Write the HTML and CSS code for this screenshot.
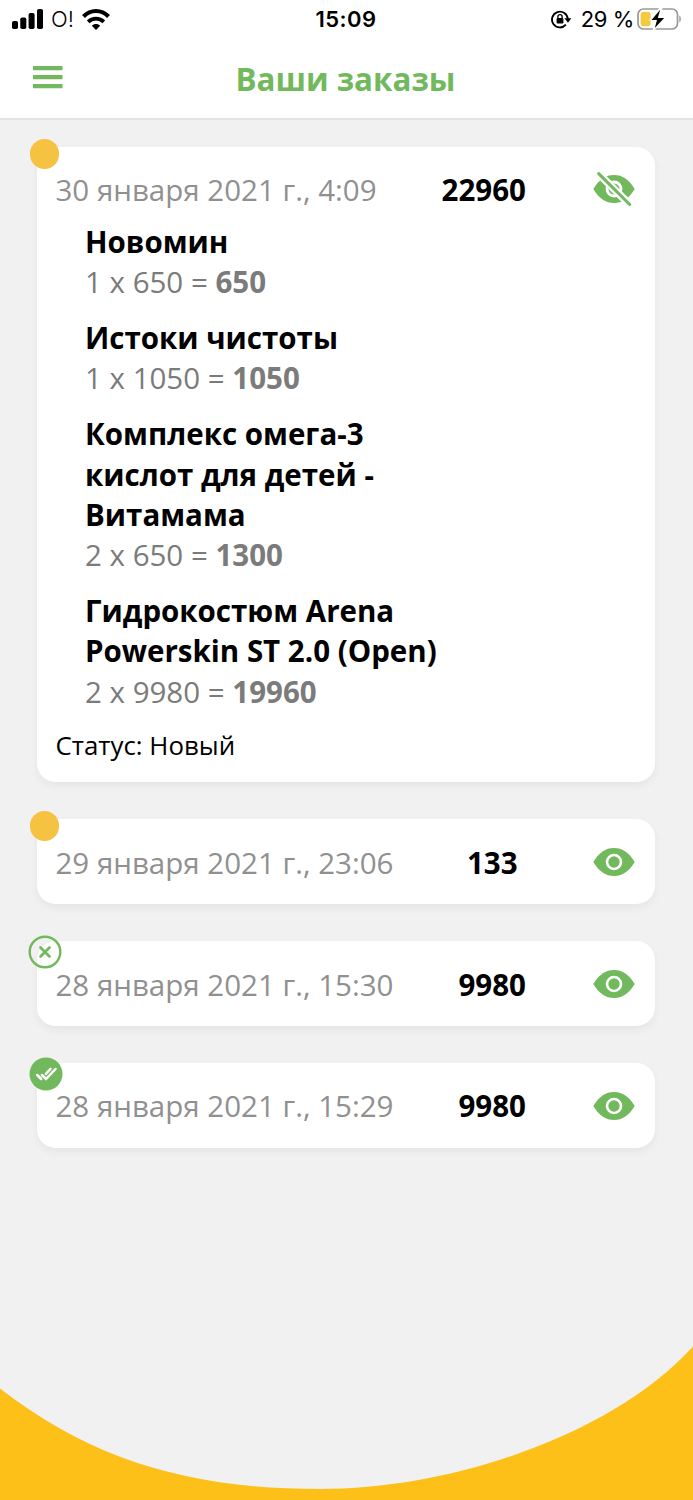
FILE: index.html
```html
<!DOCTYPE html>
<html lang="ru">
<head>
<meta charset="utf-8">
<title>Ваши заказы</title>
<link rel="stylesheet" href="styles.css">
</head>
<body>
<svg class="defs" width="0" height="0" aria-hidden="true">
  <symbol id="eye" viewBox="0 0 42 36">
    <path d="M.3 18C6 8.500 12.500 4 21 4s15 4.500 20.700 14C36 27.500 29.500 32 21 32S6 27.500.3 18Z" fill="#72b95e"/>
    <circle cx="21" cy="18" r="7" fill="none" stroke="#fff" stroke-width="2.600"/>
  </symbol>
  <symbol id="eye-off" viewBox="0 0 42 36">
    <path d="M.3 18C6 8.500 12.500 4 21 4s15 4.500 20.700 14C36 27.500 29.500 32 21 32S6 27.500.3 18Z" fill="#72b95e"/>
    <circle cx="21" cy="18" r="7" fill="none" stroke="#fff" stroke-width="2.800"/>
    <path d="M3.500.5 38 35" stroke="#fff" stroke-width="7.600"/>
    <path d="M5.700 2.700 36.700 33.500" stroke="#72b95e" stroke-width="3.100" stroke-linecap="round"/>
  </symbol>
</svg>
<div class="screen">
  <header class="top">
    <div class="status-bar">
      <div class="carrier">
        <svg width="31" height="20" viewBox="0 0 31 20"><rect x="0" y="12" width="6" height="8" rx="1.800"/><rect x="8.300" y="8.500" width="6" height="11.500" rx="1.800"/><rect x="16.600" y="4" width="6" height="16" rx="1.800"/><rect x="25" y="0" width="6" height="20" rx="1.800"/></svg>
        <span class="operator">O!</span>
        <svg class="wifi" width="28" height="21" viewBox="0 0 28 21" fill="none" stroke="#000"><path d="M1.500 7.500C8.500.3 19.500.3 26.500 7.500" stroke-width="4"/><path d="M6.200 12.900c4.400-4.300 11.200-4.300 15.600 0" stroke-width="3.700"/><path d="M14 21 9.800 16.800c2.300-2.300 6.100-2.300 8.400 0Z" fill="#000" stroke="none"/></svg>
      </div>
      <span class="clock">15:09</span>
      <div class="power">
        <svg width="21" height="19" viewBox="0 0 21 19"><path d="M14.900 14.700A7.900 7.900 0 1 1 16.800 9" fill="none" stroke="#000" stroke-width="1.900"/><path d="M13.400 8.200h7L17 12.700Z"/><rect x="5.600" y="8" width="6.800" height="5.600" rx="1"/><path d="M6.900 8.500V6.800a2.100 2.100 0 0 1 4.200 0v1.700" fill="none" stroke="#000" stroke-width="1.300"/></svg>
        <span class="percent">29 %</span>
        <svg width="45" height="22" viewBox="0 0 45 22"><rect x="1" y="1" width="39.500" height="20" rx="5.500" fill="#fff" stroke="#999" stroke-width="1.700"/><path d="M42.300 7.500c2 .8 2 6.200 0 7Z" fill="#999"/><rect x="3.600" y="3.800" width="10" height="14.500" rx="3" fill="#f5ca42"/><path d="M23.500-.5 13.500 11.800h5.300L16.300 22.500 28.500 9.300h-6.600L25-.5Z" fill="#fff" stroke="#fff" stroke-width="1.500"/><path d="M23.200 1.800 14.500 12.100h5.500l-2.200 8L27.200 10h-6.400Z"/></svg>
      </div>
    </div>
    <div class="title-bar">
      <svg class="menu" width="30" height="23" viewBox="0 0 30 23" fill="#72b95e"><path d="M0 0h29.500v4.300H0zM0 9h29.500v4.300H0zM0 18h29.500v4.300H0z"/></svg>
      <h1 class="title">Ваши заказы</h1>
    </div>
  </header>
  <main class="orders">
    <section class="card card-open">
      <span class="dot"></span>
      <div class="row"><span class="date">30 января 2021 г., 4:09</span><b class="sum">22960</b><svg class="eye"><use href="#eye-off"/></svg></div>
      <div class="items">
        <div class="item"><b>Новомин</b><p class="calc">1 x 650 = <b>650</b></p></div>
        <div class="item"><b>Истоки чистоты</b><p class="calc">1 x 1050 = <b>1050</b></p></div>
        <div class="item"><b>Комплекс омега-3<br>кислот для детей -<br>Витамама</b><p class="calc">2 x 650 = <b>1300</b></p></div>
        <div class="item"><b>Гидрокостюм Arena<br>Powerskin ST 2.0 (Open)</b><p class="calc">2 x 9980 = <b>19960</b></p></div>
      </div>
      <p class="state">Статус: Новый</p>
    </section>
    <section class="card">
      <span class="dot"></span>
      <div class="row"><span class="date">29 января 2021 г., 23:06</span><b class="sum">133</b><svg class="eye"><use href="#eye"/></svg></div>
    </section>
    <section class="card">
      <svg class="badge badge-cancel" viewBox="0 0 34 34" fill="none" stroke="#72b95e"><circle cx="17" cy="17" r="15.300" stroke-width="2.400"/><path d="m12.500 12.500 9 9m0-9-9 9" stroke-width="2.700" stroke-linecap="round"/></svg>
      <div class="row"><span class="date">28 января 2021 г., 15:30</span><b class="sum">9980</b><svg class="eye"><use href="#eye"/></svg></div>
    </section>
    <section class="card">
      <svg class="badge badge-done" viewBox="0 0 34 34" fill="none" stroke="#fff" stroke-width="2.500"><circle cx="17" cy="17" r="16.500" fill="#72b95e" stroke="none"/><path d="m8.200 18 4 4M13 18l4 4 9.500-10M16.800 16.800l4.700-4.900" stroke-linecap="round"/></svg>
      <div class="row"><span class="date">28 января 2021 г., 15:29</span><b class="sum">9980</b><svg class="eye"><use href="#eye"/></svg></div>
    </section>
  </main>
  <svg class="wave" width="693" height="160" viewBox="0 1340 693 160"><path d="M0 1388.500C92 1460 190 1489 320 1489C460 1489 618 1430 693 1346.500V1500H0Z" fill="#fcc018"/></svg>
</div>
</body>
</html>
```
FILE: styles.css
```css
* { box-sizing: border-box; }
body { margin: 0; font-family: "Open Sans", "Noto Sans", sans-serif; font-size: 29.5px; line-height: 40.3px; color: #000; }
p, h1 { margin: 0; }
svg { display: block; flex: none; }
.defs { position: absolute; }
.screen { display: flex; flex-direction: column; height: 1500px; background: #f1f1f1; overflow: hidden; }
.top { height: 120px; background: #fff; border-bottom: 2px solid #e4e4e4; }
.status-bar { display: grid; grid-template-columns: 1fr auto 1fr; align-items: center; height: 38px; padding: 0 11px 0 12px; font-family: Inter, sans-serif; font-size: 22px; line-height: 38px; }
.carrier, .power { display: flex; align-items: center; }
.carrier > svg:first-child { margin-top: -1px; }
.operator { margin-left: 8px; font-size: 22px; font-weight: 300; }
.wifi { margin-left: 8px; }
.clock { margin-right: 2px; font-weight: 600; letter-spacing: .5px; }
.power { justify-content: flex-end; }
.percent { margin: 0 3px 0 9px; letter-spacing: -.4px; }
.title-bar { display: grid; grid-template-columns: 33px 1fr 33px; align-items: center; height: 80px; }
.menu { grid-column: 2; grid-row: 1; margin-top: -2px; }
.title { grid-column: 2; grid-row: 1; justify-self: center; margin: 1px 2px 0 0; font-size: 31.4px; line-height: 42px; color: #72b95e; }
.orders { display: flex; flex-direction: column; gap: 37.3px; padding: 27px 38px 0 37px; }
.card { position: relative; padding: 23.4px 20px 21px 18.5px; border-radius: 18.5px; background: #fff; box-shadow: 0 4px 9px rgba(0, 0, 0, .05); }
.card-open { padding-bottom: 18.3px; }
.row { display: flex; justify-content: space-between; align-items: center; }
.date { color: #909090; }
.sum { margin-right: 2px; }
.eye { width: 42px; height: 36px; margin-top: -2px; }
.card-open .eye { margin-top: -3px; }
.dot { position: absolute; left: -7.5px; top: -8px; width: 29.5px; height: 29.5px; border-radius: 50%; background: #f5c242; }
.badge { position: absolute; width: 34px; height: 34px; }
.badge-cancel { left: -9px; top: -6.500px; }
.badge-done { left: -7.800px; top: -6.500px; }
.items { display: flex; flex-direction: column; gap: 15.5px; padding: 11.4px 0 16.4px 29.5px; }
.calc { color: #7b7b7b; }
.state { font-size: 25.87px; line-height: 35.3px; }
.wave { margin-top: auto; }
```
